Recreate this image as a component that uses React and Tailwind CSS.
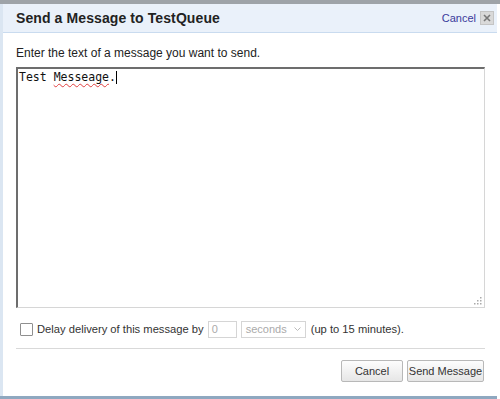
export default function App() {
  return (
    <div className="w-[500px] h-[399px] bg-white relative overflow-hidden" style={{ fontFamily: '"Liberation Sans", Arial, sans-serif' }}>
      <div className="w-[497px] h-[399px] flex flex-col border-l-[3px] border-[#dbe6f2] bg-white">
        <div className="h-[4px] bg-[#9ea3a8] -ml-[3px] w-[500px]" />
        <div className="h-[29px] bg-[#eaf1fa] border-b border-[#c9dbef] flex items-center pl-[13px] pr-[3px]">
          <div className="font-bold text-[14px] text-[#222] flex-1 tracking-[0.1px]">Send a Message to TestQueue</div>
          <a className="text-[11px] text-[#3b3b9c] mr-[4px]">Cancel</a>
          <div className="w-[14px] h-[14px] bg-[#d9d9d9] border border-[#c4c4c4] flex items-center justify-center">
            <svg width="8" height="8" viewBox="0 0 8 8"><path d="M1 1L7 7M7 1L1 7" stroke="#777" strokeWidth="1.6" /></svg>
          </div>
        </div>
        <div className="flex-1 flex flex-col pl-[13px] pr-[12px]">
          <div className="text-[12px] text-[#222] mt-[13px] leading-[15px]">Enter the text of a message you want to send.</div>
          <div className="mt-[6px] h-[241px] border border-t-[#6d6d6d] border-l-[#6d6d6d] border-r-[#d6d6d6] border-b-[#d6d6d6] border-t-[2px] border-l-[2px] relative">
            <div className="pl-[1px] pt-[1px] text-[11.5px] leading-[14px] text-[#111]" style={{ fontFamily: '"DejaVu Sans Mono", "Liberation Mono", monospace' }}>
              Test <span className="underline decoration-wavy decoration-[#e04040] decoration-1 underline-offset-2">Messeage</span>.<span className="inline-block w-px h-[13px] bg-black align-middle" />
            </div>
            <svg className="absolute right-[2px] bottom-[2px]" width="9" height="9" viewBox="0 0 9 9">
              <rect x="7" y="1" width="1.5" height="1.5" fill="#aaa" />
              <rect x="4" y="4" width="1.5" height="1.5" fill="#aaa" />
              <rect x="7" y="4" width="1.5" height="1.5" fill="#aaa" />
              <rect x="1" y="7" width="1.5" height="1.5" fill="#aaa" />
              <rect x="4" y="7" width="1.5" height="1.5" fill="#aaa" />
              <rect x="7" y="7" width="1.5" height="1.5" fill="#aaa" />
            </svg>
          </div>
          <div className="flex items-center mt-[13px] pl-[4px] text-[11.2px] text-[#333]">
            <div className="w-[13px] h-[13px] border border-[#8f8f8f] bg-white rounded-[1px]" />
            <span className="ml-[4px]">Delay delivery of this message by</span>
            <div className="ml-[4px] w-[29px] h-[17px] border border-[#d5d5d5] text-[11px] text-[#aaa] pl-[3px] leading-[15px]">0</div>
            <div className="ml-[4px] w-[65px] h-[17px] border border-[#d5d5d5] text-[11px] text-[#aaa] pl-[4px] flex items-center justify-between pr-[4px]">
              <span>seconds</span>
              <svg width="7" height="5" viewBox="0 0 7 5"><path d="M0.5 0.5L3.5 3.5L6.5 0.5" stroke="#bbb" fill="none" /></svg>
            </div>
            <span className="ml-[5px]">(up to 15 minutes).</span>
          </div>
          <div className="mt-[10px] h-px bg-[#d9d9d9]" />
          <div className="flex justify-end gap-[4px] mt-[11px] pr-[1px]">
            <button className="w-[62px] h-[22px] border border-[#b8b8b8] rounded-[2px] bg-gradient-to-b from-[#fdfdfd] to-[#e6e6e6] text-[11px] text-[#333]">Cancel</button>
            <button className="w-[77px] h-[22px] border border-[#b8b8b8] rounded-[2px] bg-gradient-to-b from-[#fdfdfd] to-[#e6e6e6] text-[11px] text-[#333]">Send Message</button>
          </div>
        </div>
      </div>
      <div className="absolute left-0 bottom-0 w-[497px] h-[3px] bg-[#8fa8c0]" />
    </div>
  );
}
